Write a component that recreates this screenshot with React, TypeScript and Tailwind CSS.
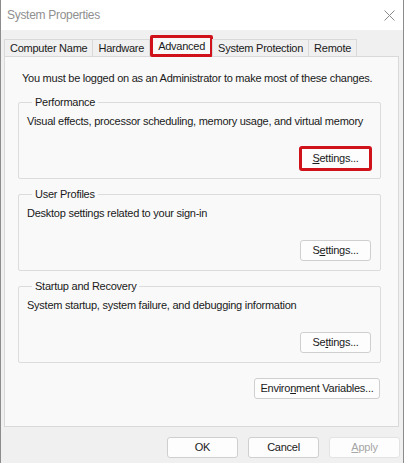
import React from "react";

const Btn = ({
  children,
  highlight,
  disabled,
  className = "",
}: {
  children: React.ReactNode;
  highlight?: boolean;
  disabled?: boolean;
  className?: string;
}) => {
  return (
    <button
      className={
        "flex items-center justify-center rounded-[3px] bg-[#fdfdfd] " +
        (highlight
          ? "h-[25px] -my-[2px] border-[3px] border-[#d0121b] "
          : disabled
          ? "h-[21px] border border-[#e3e3e3] text-[#a6a6a6] bg-[#f7f7f7] "
          : "h-[21px] border border-[#cfcfcf] ") +
        className
      }
    >
      {children}
    </button>
  );
};

const Group = ({
  title,
  text,
  button,
}: {
  title: string;
  text: string;
  button: React.ReactNode;
}) => {
  return (
    <fieldset className="border border-[#dcdcdc] rounded-[2px] px-[8px] pb-[9px]">
      <legend className="ml-[5px] px-[3px] leading-[16px]">{title}</legend>
      <div className="mt-[3px] leading-[16px] whitespace-nowrap">{text}</div>
      <div className="flex justify-end mt-[19px] pr-[1px]">{button}</div>
    </fieldset>
  );
};

const tabs = ["Computer Name", "Hardware", "Advanced", "System Protection", "Remote"];

export default function App() {
  return (
    <div className="w-[404px] h-[463px] bg-[#f0f0f0] border-x border-[#8c8c8c] flex flex-col font-['Liberation_Sans',Arial,sans-serif] text-[11px] tracking-[-0.25px] text-[#1a1a1a] overflow-hidden">
      <div className="h-[30px] bg-white flex items-center justify-between pl-[6px] pr-[6px] shrink-0">
        <span className="text-[12px] tracking-[-0.3px] text-[#8f8f8f]">System Properties</span>
        <svg width="11" height="11" viewBox="0 0 11 11" className="mr-[2px]">
          <path d="M0.5 0.5 L10.5 10.5 M10.5 0.5 L0.5 10.5" stroke="#8a8a8a" strokeWidth="1" />
        </svg>
      </div>

      <div className="flex items-end h-[22px] mt-[5px] pl-[3px] shrink-0 relative z-10">
        {tabs.map((t) =>
          t === "Advanced" ? (
            <div
              key={t}
              className="h-[22px] px-[5px] flex items-center border-[3px] border-[#d0121b] rounded-[2px] bg-[#f9f9f9]"
            >
              {t}
            </div>
          ) : (
            <div
              key={t}
              className="h-[18px] px-[5px] flex items-center border border-b-0 border-[#d9d9d9] -ml-px first:ml-0"
            >
              {t}
            </div>
          )
        )}
      </div>

      <div className="ml-[3px] mr-[4px] -mt-[1px] h-[371px] bg-[#f9f9f9] border border-[#d9d9d9] pl-[13px] pr-[17px] shrink-0">
        <div className="mt-[13px] ml-[4px] leading-[16px] whitespace-nowrap">
          You must be logged on as an Administrator to make most of these changes.
        </div>
        <div className="mt-[8px] flex flex-col gap-[7px]">
          <Group
            title="Performance"
            text="Visual effects, processor scheduling, memory usage, and virtual memory"
            button={
              <Btn highlight className="w-[73px] -mr-[1px]">
                <span>
                  <u>S</u>ettings...
                </span>
              </Btn>
            }
          />
          <Group
            title="User Profiles"
            text="Desktop settings related to your sign-in"
            button={
              <Btn className="w-[71px]">
                <span>
                  S<u>e</u>ttings...
                </span>
              </Btn>
            }
          />
          <Group
            title="Startup and Recovery"
            text="System startup, system failure, and debugging information"
            button={
              <Btn className="w-[71px]">
                <span>
                  Se<u>t</u>tings...
                </span>
              </Btn>
            }
          />
        </div>
        <div className="flex justify-end mt-[15px] mr-[1px]">
          <Btn className="w-[126px]">
            <span>
              Enviro<u>n</u>ment Variables...
            </span>
          </Btn>
        </div>
      </div>

      <div className="flex justify-end gap-[10px] mt-[10px] mr-[3px]">
        <Btn className="w-[71px]">OK</Btn>
        <Btn className="w-[71px]">Cancel</Btn>
        <Btn disabled className="w-[71px]">
          <span>
            <u>A</u>pply
          </span>
        </Btn>
      </div>
    </div>
  );
}
